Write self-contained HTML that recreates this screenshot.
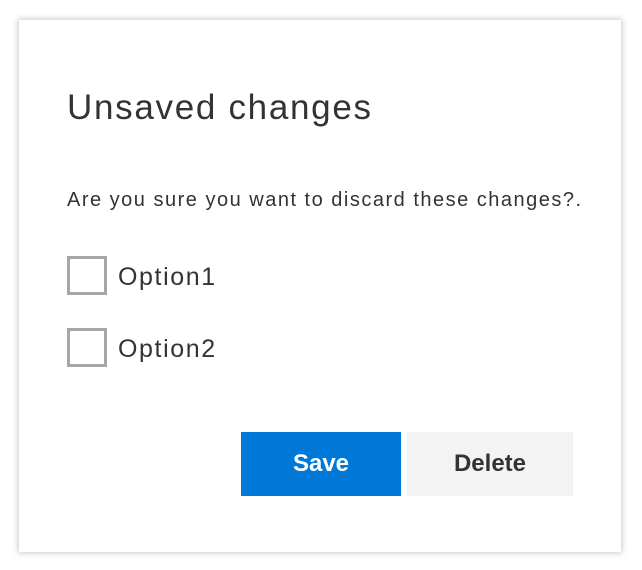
<!DOCTYPE html>
<html><head><style>
body{margin:0;width:642px;height:570px;background:#fff;font-family:"Liberation Sans",sans-serif;position:relative;overflow:hidden}
.card{position:absolute;left:19px;top:20px;width:602px;height:532px;background:#fff;box-shadow:0 0 6px 1px rgba(0,0,0,.22)}
.t{position:absolute;left:67px;top:88px;font-size:35px;font-weight:300;color:#333;letter-spacing:1.7px}
.p{position:absolute;left:67px;top:189px;font-size:20px;color:#333;letter-spacing:1.5px}
.cb{position:absolute;left:67px;width:34px;height:33px;border:3px solid #a6a6a6}
.l{position:absolute;left:118px;font-size:25px;color:#333;letter-spacing:1.6px}
.b{position:absolute;top:432px;height:64px;line-height:64px;text-align:center;font-size:24px;font-weight:bold}
</style></head><body>
<div class="card"></div>
<div class="t">Unsaved changes</div>
<div class="p">Are you sure you want to discard these changes?.</div>
<div class="cb" style="top:256px"></div><div class="l" style="top:263px">Option1</div>
<div class="cb" style="top:328px"></div><div class="l" style="top:335px">Option2</div>
<div class="b" style="left:241px;width:160px;background:#0078d7;color:#fff">Save</div>
<div class="b" style="left:407px;width:166px;background:#f3f3f3;color:#333">Delete</div>
</body></html>
